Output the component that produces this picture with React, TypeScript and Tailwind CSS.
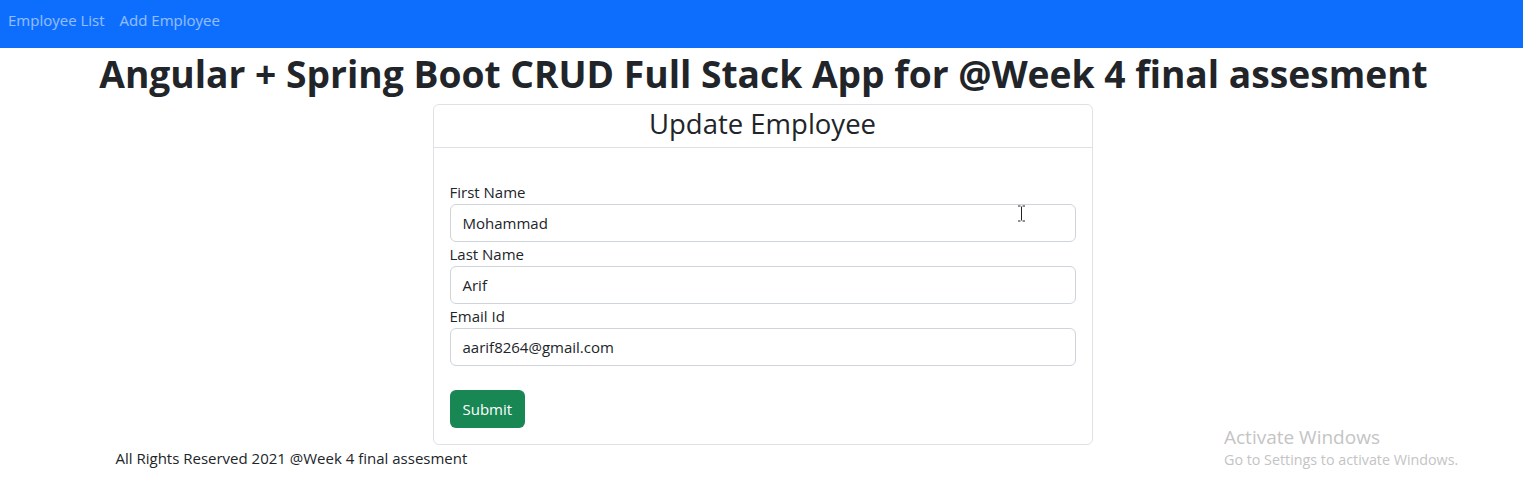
const font = { fontFamily: '"Open Sans", "Noto Sans", sans-serif' }

function Field({ label, value }: { label: string; value: string }) {
  return (
    <div>
      <label className="block h-6 leading-6 text-[15px] text-[#212529]">{label}</label>
      <div className="h-[38px] border border-[#ced4da] rounded-[6px] px-3 flex items-center text-[15px] text-[#212529]">
        {value}
      </div>
    </div>
  )
}

export default function App() {
  return (
    <div className="relative min-h-[481px] bg-white text-[#212529]" style={font}>
      {/* navbar */}
      <nav className="h-12 bg-[#0d6efd] flex items-center px-2 pb-2 gap-[15px] text-[15px] text-white/55">
        <a>Employee List</a>
        <a>Add Employee</a>
      </nav>

      <h1 className="text-center font-bold text-[37.2px] leading-[52px] pl-[4px] pb-[4px]">
        Angular + Spring Boot CRUD Full Stack App for @Week 4 final assesment
      </h1>

      <div className="w-[1320px] mx-auto pl-[13px] pr-[11px]">
        <div className="w-[660px] mx-auto border border-[#dee2e6] rounded-[6px]">
          <div className="h-[43px] border-b border-[#dee2e6] flex items-center justify-center pb-[5px] text-[27.5px]">
            Update Employee
          </div>
          <div className="px-4 pt-[32px] pb-[16px]">
            <Field label="First Name" value="Mohammad" />
            <Field label="Last Name" value="Arif" />
            <Field label="Email Id" value="aarif8264@gmail.com" />
            <button className="mt-6 h-[38px] px-[13px] rounded-[6px] bg-[#198754] text-white text-[15px]">
              Submit
            </button>
          </div>
        </div>
        <div className="text-[15px] leading-6 mt-[1px] pl-[1px]">All Rights Reserved 2021 @Week 4 final assesment</div>
      </div>

      {/* text cursor captured in the screenshot */}
      <svg className="absolute left-[1017px] top-[205px]" width="9" height="17" viewBox="0 0 9 17">
        <path d="M1 1h2.5M5.5 1H8M4.5 1.5v14M1 16h2.5M5.5 16H8" stroke="#222" strokeWidth="1" fill="none" />
      </svg>

      {/* OS watermark overlay */}
      <div className="absolute left-[1224px] top-[425px] text-[#c4c4c4]">
        <div className="text-[19px] leading-6">Activate Windows</div>
        <div className="text-[14.3px] leading-5 mt-[1px]">Go to Settings to activate Windows.</div>
      </div>
    </div>
  )
}
